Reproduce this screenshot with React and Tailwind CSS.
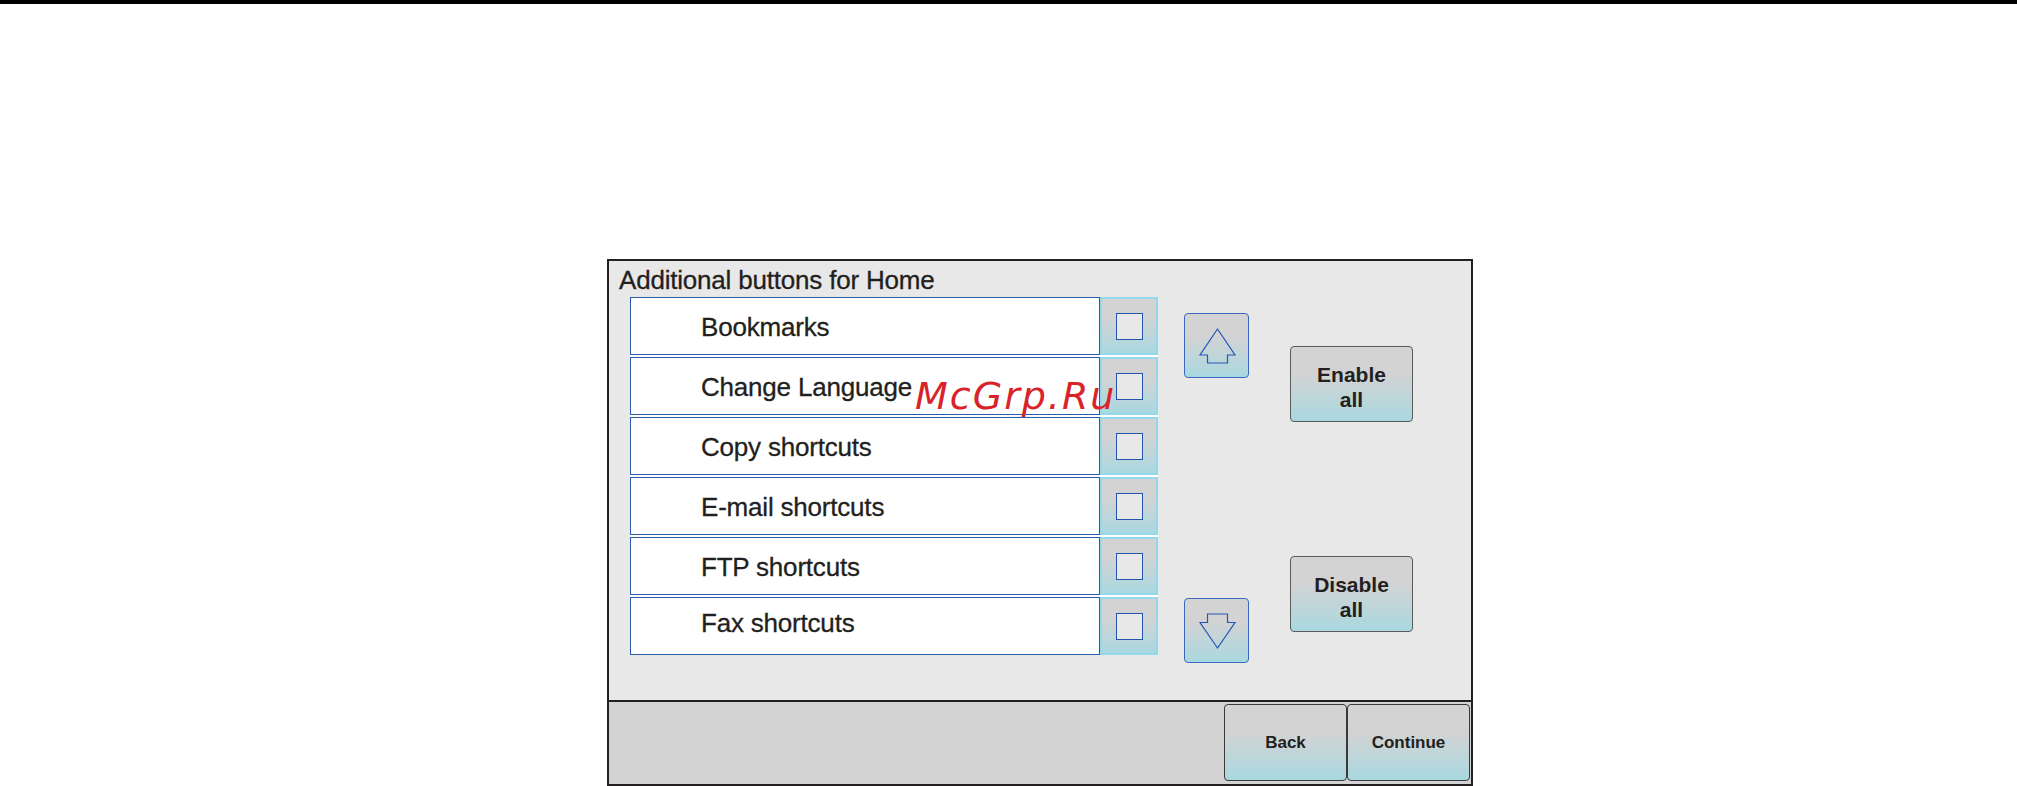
const ITEMS = ['Bookmarks', 'Change Language', 'Copy shortcuts', 'E-mail shortcuts', 'FTP shortcuts', 'Fax shortcuts'];

const GRAD = 'bg-linear-to-b from-[#d3d3d3] from-35% to-[#a8d8e0]';

function ArrowButton({ dir }) {
  const d = dir === 'up'
    ? 'M32.5 15 L50 41 L42.5 41 L42.5 49 L22.5 49 L22.5 41 L15 41 Z'
    : 'M22.5 15 L42.5 15 L42.5 23.5 L50 23.5 L32.5 49 L15 23.5 L22.5 23.5 Z';
  return (
    <div className={`w-[65px] h-[65px] rounded-[4px] border border-[#3a68c0] ${GRAD}`}>
      <svg viewBox="0 0 63 63" className="w-full h-full">
        <path d={d} fill="none" stroke="#2456b8" strokeWidth="1.2" strokeLinejoin="miter" />
      </svg>
    </div>
  );
}

function BigButton({ top, bottom }) {
  return (
    <div className={`w-[123px] h-[76px] rounded-[4px] border border-[#5a5a5a] ${GRAD} flex flex-col items-center justify-center pt-[6px] text-[21px] leading-[25px] font-bold text-[#231f20]`}>
      <span>{top}</span>
      <span>{bottom}</span>
    </div>
  );
}

export default function App() {
  return (
    <div className="min-h-screen bg-white font-['Liberation_Sans',Arial,sans-serif] text-[#231f20]">
      <div className="h-[4px] bg-black" />

      <div className="ml-[607px] mt-[255px] w-[866px] h-[527px] border-2 border-[#231f20] bg-[#e8e8e8] flex flex-col">
        <div className="relative h-[439px]">
          <div className="pl-[10px] pt-[4px] text-[26px] leading-[30px] tracking-[-0.2px] [-webkit-text-stroke:0.3px_#231f20]">Additional buttons for Home</div>

          <div className="flex items-start pl-[21px] mt-[2px]">
            <div className="flex flex-col gap-[2px] bg-white">
              {ITEMS.map((name, i) => (
                <div key={name} className="flex h-[58px]">
                  <div className={`w-[470px] h-full border border-[#2a5caa] bg-white pl-[70px] flex items-center text-[26px] leading-[30px] tracking-[-0.2px] [-webkit-text-stroke:0.3px_#231f20] ${i === ITEMS.length - 1 ? 'pb-[7px]' : 'pt-[2px]'}`}>
                    {name}
                  </div>
                  <div className={`w-[58px] h-full border-2 border-[#93d9e9] ${GRAD} flex items-center justify-center`}>
                    <div className="w-[27px] h-[27px] border-[1.5px] border-[#2456b0] bg-[#e8e8e8]" />
                  </div>
                </div>
              ))}
            </div>

            <div className="ml-[26px] pt-[16px] h-[366px] flex flex-col justify-between">
              <ArrowButton dir="up" />
              <ArrowButton dir="down" />
            </div>

            <div className="ml-[41px] flex flex-col">
              <div className="mt-[49px]">
                <BigButton top="Enable" bottom="all" />
              </div>
              <div className="mt-[134px]">
                <BigButton top="Disable" bottom="all" />
              </div>
            </div>
          </div>

          <div className="absolute left-[306px] top-[117px] font-['DejaVu_Sans',sans-serif] italic text-[38px] leading-[37px] tracking-[2px] text-[#d8232a] pointer-events-none">
            McGrp.Ru
          </div>
        </div>

        <div className="flex-1 border-t-2 border-[#231f20] bg-[#d3d3d3] flex justify-end pt-[2px] pr-[1px]">
          {['Back', 'Continue'].map((label) => (
            <div key={label} className={`w-[123px] h-[77px] rounded-[4px] border border-[#3a3a3a] ${GRAD} flex items-center justify-center text-[17px] leading-[20px] font-bold`}>
              {label}
            </div>
          ))}
        </div>
      </div>
    </div>
  );
}
